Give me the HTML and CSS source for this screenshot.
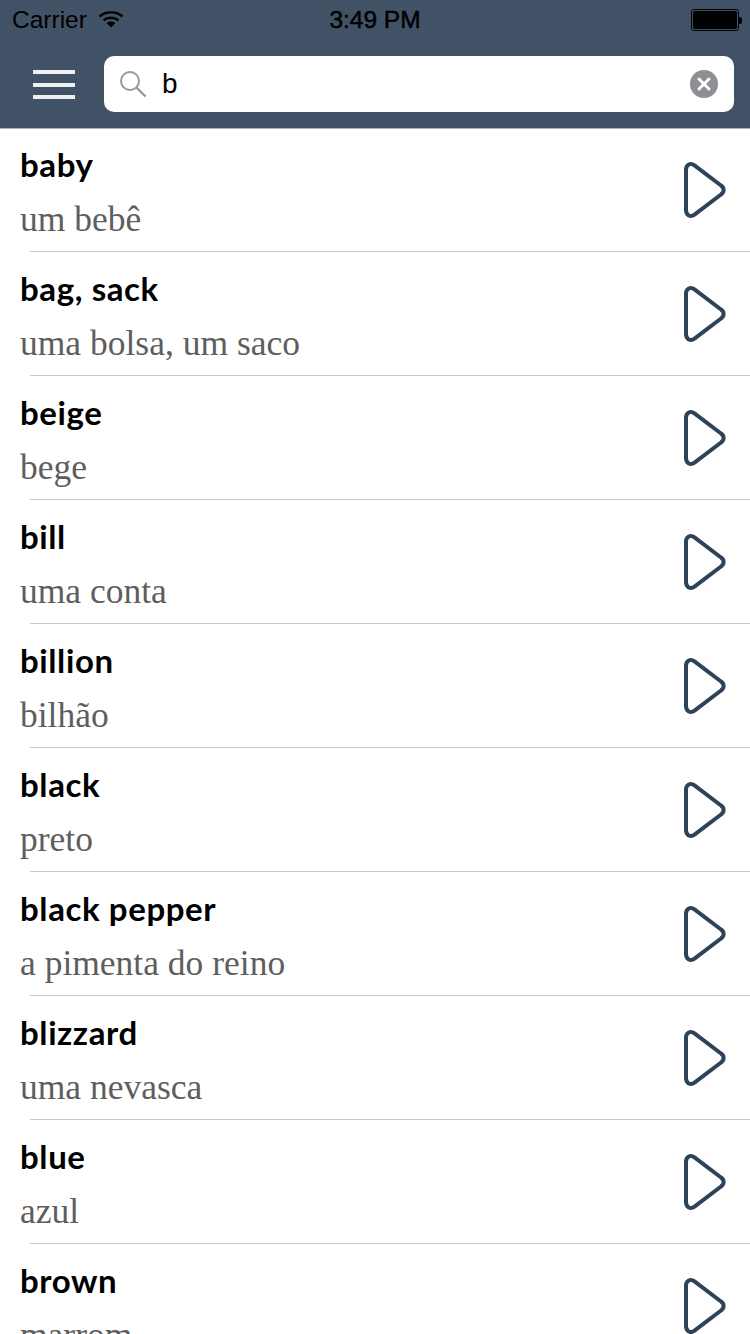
FILE: index.html
```html
<!DOCTYPE html>
<html lang="en">
<head>
    <meta charset="UTF-8">
    <meta name="viewport" content="width=device-width, initial-scale=1.0">
    <link rel="stylesheet" href="styles.css">
    <title>Dictionary Search</title>
</head>
<body>
    <svg class="sprite" width="0" height="0" aria-hidden="true">
        <symbol id="play" viewBox="0 0 44 60">
            <path d="M4 9 C4 3.500 8.500 1.500 12.500 4.300 L39 24.500 C42.500 27 42.500 31 39 33.500 L12.500 53.700 C8.500 56.500 4 54.500 4 49 Z" fill="none" stroke="#2f4358" stroke-width="4"/>
        </symbol>
    </svg>

    <header class="top">
        <div class="status-bar">
            <div class="status-left">
                <span>Carrier</span>
                <svg class="wifi" width="26" height="18" viewBox="0 0 26 18">
                    <path d="M1.500 6.500 C7.500 1 18.500 1 24.500 6.500" fill="none" stroke="#000" stroke-width="2.400"/>
                    <path d="M5.500 10.300 C9.500 6.800 16.500 6.800 20.500 10.300" fill="none" stroke="#000" stroke-width="2.400"/>
                    <path d="M8.500 13 C11 11 15 11 17.500 13 L13 17.500 Z" fill="#000"/>
                </svg>
            </div>
            <span class="status-time">3:49 PM</span>
            <div class="battery">
                <div class="battery-body"><div class="battery-fill"></div></div>
                <div class="battery-tip"></div>
            </div>
        </div>
        <div class="nav-bar">
            <button class="menu-button" aria-label="Menu">
                <span></span><span></span><span></span>
            </button>
            <div class="search-box">
                <svg class="search-icon" width="28" height="28" viewBox="0 0 28 28">
                    <circle cx="11" cy="11" r="9" fill="none" stroke="#999" stroke-width="2"/>
                    <path d="M17.500 17.500 L26.500 26.500" stroke="#999" stroke-width="2.400"/>
                </svg>
                <span class="search-text">b</span>
                <svg class="clear-icon" width="28" height="28" viewBox="0 0 28 28">
                    <circle cx="14" cy="14" r="14" fill="#8e8e93"/>
                    <path d="M9 9 L19 19 M19 9 L9 19" stroke="#fff" stroke-width="3" stroke-linecap="round"/>
                </svg>
            </div>
        </div>
    </header>

    <main class="word-list">
        <div class="word-row"><div class="word-text"><div class="word">baby</div><div class="meaning">um bebê</div></div><svg class="play"><use href="#play"/></svg></div>
        <div class="word-row"><div class="word-text"><div class="word">bag, sack</div><div class="meaning">uma bolsa, um saco</div></div><svg class="play"><use href="#play"/></svg></div>
        <div class="word-row"><div class="word-text"><div class="word">beige</div><div class="meaning">bege</div></div><svg class="play"><use href="#play"/></svg></div>
        <div class="word-row"><div class="word-text"><div class="word">bill</div><div class="meaning">uma conta</div></div><svg class="play"><use href="#play"/></svg></div>
        <div class="word-row"><div class="word-text"><div class="word">billion</div><div class="meaning">bilhão</div></div><svg class="play"><use href="#play"/></svg></div>
        <div class="word-row"><div class="word-text"><div class="word">black</div><div class="meaning">preto</div></div><svg class="play"><use href="#play"/></svg></div>
        <div class="word-row"><div class="word-text"><div class="word">black pepper</div><div class="meaning">a pimenta do reino</div></div><svg class="play"><use href="#play"/></svg></div>
        <div class="word-row"><div class="word-text"><div class="word">blizzard</div><div class="meaning">uma nevasca</div></div><svg class="play"><use href="#play"/></svg></div>
        <div class="word-row"><div class="word-text"><div class="word">blue</div><div class="meaning">azul</div></div><svg class="play"><use href="#play"/></svg></div>
        <div class="word-row"><div class="word-text"><div class="word">brown</div><div class="meaning">marrom</div></div><svg class="play"><use href="#play"/></svg></div>
    </main>
</body>
</html>
```

FILE: styles.css
```css
html, body {
    height: 1334px;
    overflow: hidden;
}

body {
    margin: 0;
    font-family: "Liberation Sans", Arial, sans-serif;
    background-color: #ffffff;
}

.sprite {
    position: absolute;
}

.top {
    height: 129px;
    box-sizing: border-box;
    background-color: #425266;
    border-bottom: 1px solid #b2b2b2;
}

.status-bar {
    height: 40px;
    display: flex;
    align-items: center;
    justify-content: space-between;
    padding: 0 8px 0 12px;
    font-size: 24.500px;
    color: #000000;
}

.status-left {
    width: 236px;
    display: flex;
    align-items: center;
    gap: 11px;
}

.wifi {
    margin-top: -2px;
}

.status-time {
    font-weight: 400;
    -webkit-text-stroke: 0.5px #000;
}

.battery {
    width: 240px;
    display: flex;
    justify-content: flex-end;
    align-items: center;
}

.battery-body {
    width: 44px;
    height: 18px;
    border: 1px solid #000;
    border-radius: 3px;
    padding: 1px;
}

.battery-fill {
    height: 100%;
    background-color: #000;
    border-radius: 2px;
}

.battery-tip {
    width: 3px;
    height: 7px;
    background-color: #000;
    border-radius: 0 2px 2px 0;
}

.nav-bar {
    height: 88px;
    display: flex;
    align-items: flex-start;
    padding: 16px 16px 0 33px;
    box-sizing: border-box;
}

.menu-button {
    width: 42px;
    height: 57px;
    margin-right: 29px;
    padding: 0;
    border: none;
    background: none;
    display: flex;
    flex-direction: column;
    justify-content: center;
    gap: 8.500px;
}

.menu-button span {
    display: block;
    height: 4px;
    background-color: #eef0f2;
}

.search-box {
    flex: 1;
    height: 56px;
    background-color: #ffffff;
    border-radius: 10px;
    display: flex;
    align-items: center;
    padding: 0 16px 0 15px;
}

.search-icon {
    margin-right: 15px;
}

.search-text {
    flex: 1;
    font-size: 28px;
    color: #000000;
}

/* first row tucks under the header border */
.word-list {
    margin-top: -1px;
}

.word-row {
    height: 124px;
    box-sizing: border-box;
    padding-left: 20px;
    padding-right: 24px;
    display: flex;
    align-items: flex-start;
    justify-content: space-between;
    position: relative;
}

/* separator starts a little in from the left */
.word-row::after {
    content: "";
    position: absolute;
    left: 30px;
    right: 0;
    bottom: 0;
    height: 1px;
    background-color: #c8c7cc;
}

.word {
    font-family: Lato, sans-serif;
    font-weight: 700;
    font-size: 33px;
    letter-spacing: 0.600px;
    line-height: 40px;
    margin-top: 16px;
    color: #000000;
}

.meaning {
    font-family: "Liberation Serif", "Times New Roman", serif;
    font-size: 35.500px;
    line-height: 40px;
    margin-top: 15px;
    color: #5e5e5e;
}

.play {
    width: 44px;
    height: 60px;
    margin-top: 33px;
}
```
